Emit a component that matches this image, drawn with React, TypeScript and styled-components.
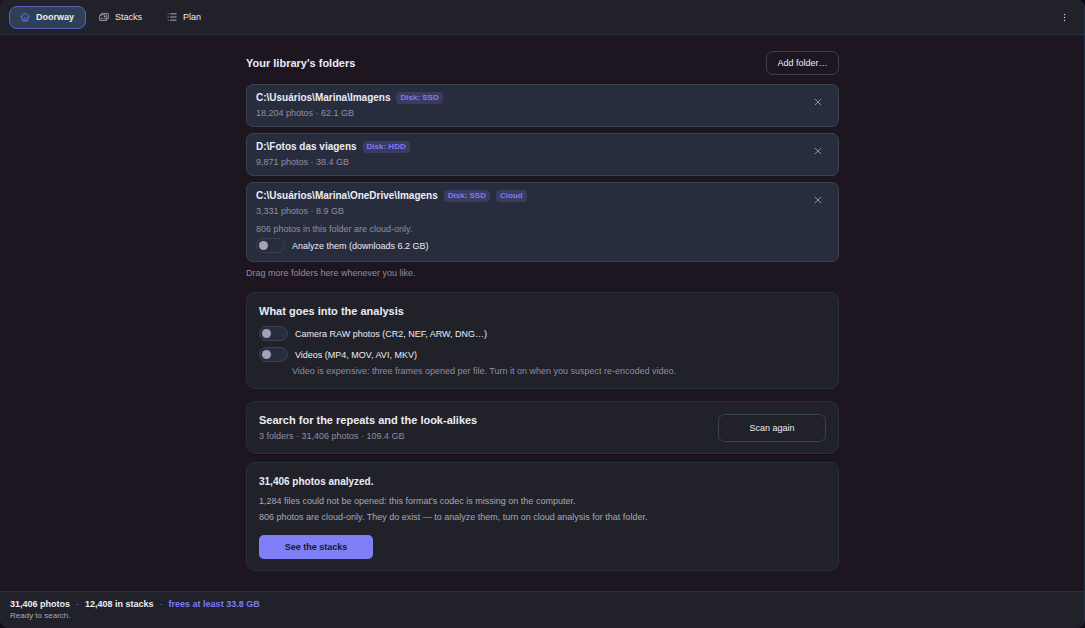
import React from "react";
import styled, { createGlobalStyle } from "styled-components";

const color = {
  backdrop: "#1d151f",
  surface: "#21212a",
  raised: "#282d3e",
  line: "#282f40",
  lineStrong: "#3a434d",
  text: "#ececf4",
  muted: "#8f8da2",
  soft: "#a9a7b8",
  accent: "#7c7cf5",
};

const Global = createGlobalStyle`
  *, *::before, *::after { box-sizing: border-box; }
  html, body, #root { height: 100%; }
  body {
    margin: 0;
    background: #0d0b14;
    color: ${color.text};
    font: 9px/12px "Liberation Sans", Arial, sans-serif;
  }
  button, input { font: inherit; color: inherit; margin: 0; }
  h1, h2, h3, p, ul { margin: 0; padding: 0; }
  button { cursor: pointer; }
`;

const Window = styled.div`
  min-height: 100%;
  display: flex;
  flex-direction: column;
  background: ${color.backdrop};
  border-right: 1px solid ${color.line};
  border-radius: 0 8px 8px 8px;
  overflow: hidden;
`;

const TopBar = styled.header`
  display: flex;
  align-items: center;
  justify-content: space-between;
  height: 35px;
  padding: 0 10px 0 9px;
  background: ${color.surface};
  border-bottom: 1px solid ${color.line};
  border-top-left-radius: 8px;
`;

const Tabs = styled.nav`
  display: flex;
  gap: 2px;
`;

const Tab = styled.button<{ $active?: boolean }>`
  display: flex;
  align-items: center;
  gap: 6px;
  height: 23px;
  padding: 0 11px 0 10px;
  border: 1px solid ${(p) => (p.$active ? "#5f5fc0" : "transparent")};
  border-radius: 8px;
  background: ${(p) => (p.$active ? "#2f3f56" : "transparent")};
  font-weight: ${(p) => (p.$active ? 700 : 400)};
  svg { color: ${(p) => (p.$active ? color.accent : color.soft)}; }
`;

const IconButton = styled.button`
  display: grid;
  place-items: center;
  width: 20px;
  height: 20px;
  padding: 0;
  border: 0;
  background: none;
  color: ${color.soft};
`;

const Main = styled.main`
  flex: 1;
  padding: 16px 20px 16px 21px;
`;

const Column = styled.div`
  width: 100%;
  max-width: 593px;
  margin: 0 auto;
`;

const TitleRow = styled.div`
  display: flex;
  align-items: center;
  justify-content: space-between;
  margin-bottom: 9px;
`;

const Title = styled.h2`
  font-size: 11px;
  line-height: 14px;
  font-weight: 700;
`;

const OutlineButton = styled.button<{ $large?: boolean }>`
  height: ${(p) => (p.$large ? 28 : 24)}px;
  padding: 0 10px;
  min-width: ${(p) => (p.$large ? 108 : 73)}px;
  border: 1px solid ${color.lineStrong};
  border-radius: 7px;
  background: transparent;
`;

const FolderList = styled.ul`
  display: grid;
  gap: 6px;
  list-style: none;
`;

const Folder = styled.li`
  display: flex;
  justify-content: space-between;
  align-items: flex-start;
  padding: 7px 10px 7px 9px;
  border: 1px solid ${color.lineStrong};
  border-radius: 7px;
  background: ${color.raised};
`;

const FolderHead = styled.div`
  display: flex;
  align-items: center;
  gap: 6px;
  height: 12px;
  margin-bottom: 3px;
`;

const FolderName = styled.h3`
  font-size: 10px;
  line-height: 12px;
  font-weight: 700;
`;

const Badge = styled.span`
  height: 12px;
  padding: 0 4px;
  border-radius: 4px;
  background: #3b3b5f;
  color: ${color.accent};
  font-size: 8px;
  line-height: 12px;
  font-weight: 700;
`;

const Note = styled.p`
  color: ${color.muted};
`;

const DropHint = styled(Note)`
  margin-top: 5px;
`;

const CloudBlock = styled.div`
  display: grid;
  gap: 3px;
  padding: 6px 0 1px;
`;

const SwitchRow = styled.label`
  display: flex;
  align-items: center;
  gap: 7px;
  height: 15px;
`;

const Toggle = styled.input`
  appearance: none;
  display: flex;
  align-items: center;
  width: 29px;
  height: 15px;
  padding: 0 2px;
  border: 1px solid ${color.lineStrong};
  border-radius: 8px;
  background: ${color.raised};
  &::before {
    content: "";
    width: 9px;
    height: 9px;
    border-radius: 50%;
    background: #a5a1bd;
  }
  &:checked { justify-content: flex-end; background: ${color.accent}; }
`;

const Panel = styled.section<{ $gap: number }>`
  margin-top: ${(p) => p.$gap}px;
  padding: 11px 12px;
  border: 1px solid ${color.line};
  border-radius: 9px;
  background: ${color.surface};
`;

const Options = styled.div`
  display: grid;
  gap: 6px;
  margin-top: 8px;
`;

const OptionNote = styled(Note)`
  padding: 3px 0 0 33px;
`;

const SearchPanel = styled(Panel)`
  display: flex;
  align-items: center;
  justify-content: space-between;
  box-shadow: 0 1px 0 #0f0c16;
  ${Note} { margin-top: 3px; }
`;

const ResultPanel = styled(Panel)`
  padding-top: 12px;
`;

const ResultTitle = styled.h2`
  font-size: 10px;
  line-height: 14px;
  font-weight: 700;
`;

const ResultText = styled.div`
  display: grid;
  gap: 4px;
  margin: 6px 0 12px;
  color: ${color.soft};
`;

const PrimaryButton = styled.button`
  min-width: 114px;
  height: 24px;
  border: 0;
  border-radius: 5px;
  background: #7f80f5;
  color: #17172a;
  font-weight: 700;
`;

const StatusBar = styled.footer`
  height: 37px;
  padding: 6px 10px;
  background: ${color.surface};
  border-top: 1px solid ${color.line};
`;

const Totals = styled.div`
  display: flex;
  gap: 6px;
  font-weight: 700;
  span { color: ${color.muted}; font-weight: 400; }
  em { color: ${color.accent}; font-style: normal; }
`;

const Ready = styled.p`
  color: ${color.soft};
  font-size: 8px;
  line-height: 11px;
`;

const stroke = {
  fill: "none",
  stroke: "currentColor",
  strokeLinecap: "round" as const,
  strokeLinejoin: "round" as const,
  "aria-hidden": true,
};

const HomeIcon = () => (
  <svg width="10" height="10" viewBox="0 0 24 24" strokeWidth="1.8" {...stroke}>
    <path d="M1.500 11.500 12 2.500l10.500 9M4.500 10v10.500q0 1 1 1h13q1 0 1-1V10M9.500 21V15.500q0-1.500 1.500-1.500h2q1.500 0 1.500 1.500V21" />
  </svg>
);

const StacksIcon = () => (
  <svg width="10" height="10" viewBox="0 0 24 24" strokeWidth="2" {...stroke}>
    <path d="M5.500 6V5q0-1.500 1.500-1.500h14q1.500 0 1.500 1.500v10q0 1.500-1.500 1.500h-1.500" />
    <rect x="1.500" y="7" width="17" height="13.500" rx="2" />
    <path d="m3 18.500 4.500-5 4 4L14 15l4 3.500" />
    <circle cx="13.500" cy="11" r="1.200" />
  </svg>
);

const PlanIcon = () => (
  <svg width="10" height="10" viewBox="0 0 24 24" strokeWidth="2.400" {...stroke}>
    <path d="M8.500 4.500H22M8.500 12H22M8.500 19.500H22M2.500 4.500h.5M2.500 12h.5M2.500 19.500h.5" />
  </svg>
);

const MoreIcon = () => (
  <svg width="10" height="10" viewBox="0 0 10 10" fill="#d5d5e0" aria-hidden>
    <circle cx="5.500" cy="2.500" r="0.700" />
    <circle cx="5.500" cy="5.500" r="0.700" />
    <circle cx="5.500" cy="8.500" r="0.700" />
  </svg>
);

const CloseIcon = () => (
  <svg width="8" height="8" viewBox="0 0 8 8" strokeWidth="0.8" {...stroke}>
    <path d="m1.200 1.200 5.600 5.600M6.800 1.200 1.200 6.800" />
  </svg>
);

type FolderData = {
  path: string;
  stats: string;
  badges: string[];
  cloud?: { note: string; action: string };
};

const folders: FolderData[] = [
  { path: "C:\\Usuários\\Marina\\Imagens", stats: "18,204 photos · 62.1 GB", badges: ["Disk: SSD"] },
  { path: "D:\\Fotos das viagens", stats: "9,871 photos · 38.4 GB", badges: ["Disk: HDD"] },
  {
    path: "C:\\Usuários\\Marina\\OneDrive\\Imagens",
    stats: "3,331 photos · 8.9 GB",
    badges: ["Disk: SSD", "Cloud"],
    cloud: {
      note: "806 photos in this folder are cloud-only.",
      action: "Analyze them (downloads 6.2 GB)",
    },
  },
];

const Switch = ({ label }: { label: string }) => (
  <SwitchRow>
    <Toggle type="checkbox" />
    {label}
  </SwitchRow>
);

export default function App() {
  return (
    <>
      <Global />
      <Window>
        <TopBar>
          <Tabs>
            <Tab $active><HomeIcon />Doorway</Tab>
            <Tab><StacksIcon />Stacks</Tab>
            <Tab><PlanIcon />Plan</Tab>
          </Tabs>
          <IconButton aria-label="More"><MoreIcon /></IconButton>
        </TopBar>
        <Main>
          <Column>
            <TitleRow>
              <Title>Your library's folders</Title>
              <OutlineButton>Add folder…</OutlineButton>
            </TitleRow>
            <FolderList>
              {folders.map((f) => (
                <Folder key={f.path}>
                  <div>
                    <FolderHead>
                      <FolderName>{f.path}</FolderName>
                      {f.badges.map((b) => <Badge key={b}>{b}</Badge>)}
                    </FolderHead>
                    <Note>{f.stats}</Note>
                    {f.cloud && (
                      <CloudBlock>
                        <Note>{f.cloud.note}</Note>
                        <Switch label={f.cloud.action} />
                      </CloudBlock>
                    )}
                  </div>
                  <IconButton aria-label="Remove folder"><CloseIcon /></IconButton>
                </Folder>
              ))}
            </FolderList>
            <DropHint>Drag more folders here whenever you like.</DropHint>
            <Panel $gap={13}>
              <Title>What goes into the analysis</Title>
              <Options>
                <Switch label="Camera RAW photos (CR2, NEF, ARW, DNG…)" />
                <Switch label="Videos (MP4, MOV, AVI, MKV)" />
              </Options>
              <OptionNote>
                Video is expensive: three frames opened per file. Turn it on when you suspect re-encoded video.
              </OptionNote>
            </Panel>
            <SearchPanel $gap={12}>
              <div>
                <Title>Search for the repeats and the look-alikes</Title>
                <Note>3 folders · 31,406 photos · 109.4 GB</Note>
              </div>
              <OutlineButton $large>Scan again</OutlineButton>
            </SearchPanel>
            <ResultPanel $gap={8}>
              <ResultTitle>31,406 photos analyzed.</ResultTitle>
              <ResultText>
                <p>1,284 files could not be opened: this format's codec is missing on the computer.</p>
                <p>806 photos are cloud-only. They do exist — to analyze them, turn on cloud analysis for that folder.</p>
              </ResultText>
              <PrimaryButton>See the stacks</PrimaryButton>
            </ResultPanel>
          </Column>
        </Main>
        <StatusBar>
          <Totals>
            31,406 photos <span>·</span> 12,408 in stacks <span>·</span>
            <em>frees at least 33.8 GB</em>
          </Totals>
          <Ready>Ready to search.</Ready>
        </StatusBar>
      </Window>
    </>
  );
}
